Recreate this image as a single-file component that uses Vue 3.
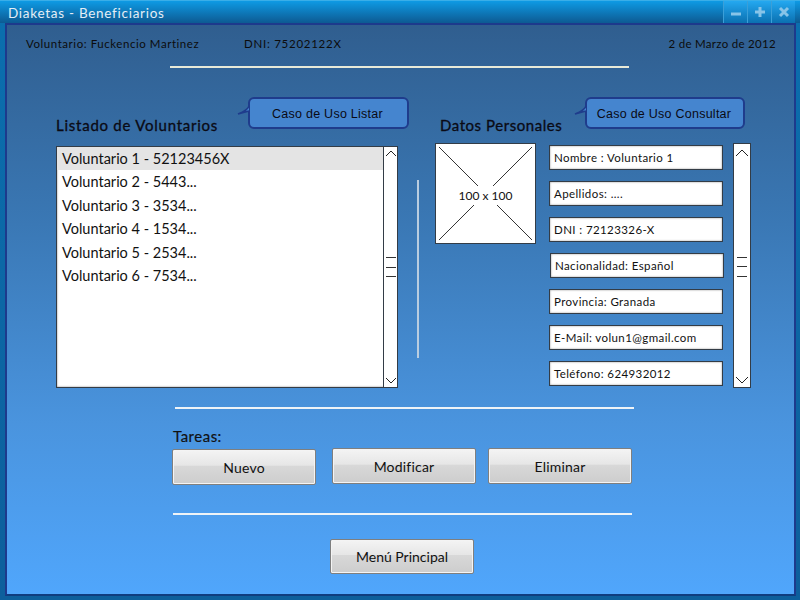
<template>
    <div class="window">
        <div class="titlebar">
            <span class="title">Diaketas - Beneficiarios</span>
            <div class="win-buttons">
                <div class="win-btn">
                    <svg width="12" height="12" viewBox="0 0 12 12"><path d="M1 8h10" class="glyph" /></svg>
                </div>
                <div class="win-btn">
                    <svg width="12" height="12" viewBox="0 0 12 12"><path d="M1 6h10M6 1v10" class="glyph" /></svg>
                </div>
                <div class="win-btn">
                    <svg width="12" height="12" viewBox="0 0 12 12"><path d="M2 2l8 8M10 2l-8 8" class="glyph" /></svg>
                </div>
            </div>
        </div>

        <div class="body">
            <div class="info">
                <span class="info-name">Voluntario: Fuckencio Martinez</span>
                <span class="info-dni">DNI: 75202122X</span>
                <span class="info-date">2 de Marzo de 2012</span>
            </div>
            <div class="rule rule-top"></div>

            <div class="main">
                <section class="left">
                    <div class="head">
                        <h2>Listado de Voluntarios</h2>
                        <div class="callout callout-left">
                            <svg class="tail" width="13" height="12" viewBox="0 0 13 12"><path d="M12 0C11 4 6 6 1 8L12 5" /></svg>
                            Caso de Uso Listar
                        </div>
                    </div>
                    <div class="listbox">
                        <ul class="items">
                            <li v-for="(item, i) in voluntarios" :key="item" :class="{ selected: i === 0 }">{{ item }}</li>
                        </ul>
                        <div class="scrollbar">
                            <svg class="chev" width="12" height="8" viewBox="0 0 12 8"><path d="M1 6l5-5 5 5" /></svg>
                            <div class="thumb"><i></i><i></i><i></i></div>
                            <svg class="chev" width="12" height="8" viewBox="0 0 12 8"><path d="M1 2l5 5 5-5" /></svg>
                        </div>
                    </div>
                </section>

                <div class="vline"></div>

                <section class="right">
                    <div class="head head-right">
                        <h2>Datos Personales</h2>
                        <div class="callout callout-right">
                            <svg class="tail" width="13" height="12" viewBox="0 0 13 12"><path d="M12 0C11 4 6 6 1 8L12 5" /></svg>
                            Caso de Uso Consultar
                        </div>
                    </div>
                    <div class="details">
                        <div class="photo">
                            <svg width="100" height="100" viewBox="0 0 100 100">
                                <path d="M3 3l94 94M97 3L3 97" />
                            </svg>
                            <span>100 x 100</span>
                        </div>
                        <div class="fields">
                            <div v-for="f in campos" :key="f" class="field">{{ f }}</div>
                        </div>
                        <div class="scrollbar scrollbar-tall">
                            <svg class="chev" width="14" height="8" viewBox="0 0 14 8"><path d="M1 7l6-6 6 6" /></svg>
                            <div class="thumb"><i></i><i></i><i></i></div>
                            <svg class="chev" width="14" height="8" viewBox="0 0 14 8"><path d="M1 1l6 6 6-6" /></svg>
                        </div>
                    </div>
                </section>
            </div>

            <div class="rule rule-mid"></div>

            <div class="tasks">
                <div class="tasks-label">Tareas:</div>
                <div class="task-buttons">
                    <button class="btn btn-low">Nuevo</button>
                    <button class="btn">Modificar</button>
                    <button class="btn btn-last">Eliminar</button>
                </div>
            </div>

            <div class="rule rule-bottom"></div>

            <div class="footer">
                <button class="btn btn-menu">Menú Principal</button>
            </div>
        </div>
    </div>
</template>

<script setup>
const voluntarios = [
    'Voluntario 1 - 52123456X',
    'Voluntario 2 - 5443...',
    'Voluntario 3 - 3534...',
    'Voluntario 4 - 1534...',
    'Voluntario 5 - 2534...',
    'Voluntario 6 - 7534...',
];

const campos = [
    'Nombre : Voluntario 1',
    'Apellidos: ....',
    'DNI : 72123326-X',
    'Nacionalidad: Español',
    'Provincia: Granada',
    'E-Mail: volun1@gmail.com',
    'Teléfono: 624932012',
];
</script>

<style>
html,
body {
    margin: 0;
    background: #0f3d7f;
}
</style>

<style scoped>
.window {
    width: 800px;
    height: 600px;
    display: flex;
    flex-direction: column;
    overflow: hidden;
    font-family: Lato, "Open Sans", sans-serif;
    color: #111;
    background: linear-gradient(#0b6fae, #0d5f9c);
    box-sizing: border-box;
}
.titlebar {
    height: 23px;
    flex: none;
    display: flex;
    justify-content: space-between;
    background: linear-gradient(#0e9ae4, #0d5a92);
    border-top: 1px solid #3aaee8;
    box-sizing: border-box;
}
.title {
    margin-left: 8px;
    font-size: 13.5px;
    line-height: 24px;
    letter-spacing: 0.72px;
    color: #e4eef6;
}
.win-buttons {
    display: flex;
    margin-right: 5px;
}
.win-btn {
    width: 24px;
    height: 22px;
    display: flex;
    align-items: center;
    justify-content: center;
    background: linear-gradient(#24a8f0, #0b70b0);
    border-left: 1px solid #3b9fd8;
    box-sizing: border-box;
}
.glyph {
    fill: none;
    stroke: #88c4e8;
    stroke-width: 3;
}

.body {
    flex: 1;
    margin: 0 4px 4px 5px;
    border: 2px solid #1d3a8c;
    border-bottom-color: #0f3d7f;
    background: linear-gradient(#305e8f, #3a78b5 35%, #4a94de 70%, #50a6fc);
    box-sizing: border-box;
}

.info {
    display: flex;
    padding: 11px 18px 0 19px;
    font-size: 11.5px;
    line-height: 15px;
    letter-spacing: 0.55px;
    color: #0c0c0c;
}
.info-name {
    width: 218px;
}
.info-date {
    margin-left: auto;
    letter-spacing: 0.3px;
}
.info-dni {
    letter-spacing: 0.73px;
}

.rule {
    height: 2px;
    background: #eef3f7;
}
.rule-top {
    width: 459px;
    margin: 15px 0 0 163px;
    background: #e8ead8;
}
.rule-mid {
    width: 459px;
    margin: 19px 0 0 168px;
}
.rule-bottom {
    width: 459px;
    margin: 28px 0 0 166px;
}

.main {
    display: flex;
    margin-top: 30px;
    padding-left: 49px;
}
.head {
    height: 48px;
    display: flex;
    align-items: flex-start;
    position: relative;
}
.head h2 {
    margin: 17px 0 0;
    font-size: 15px;
    font-weight: 400;
    line-height: 20px;
    letter-spacing: 0.75px;
    color: #0a0a14;
    -webkit-text-stroke: 0.3px #0a0a14;
    white-space: nowrap;
}
.head-right h2 {
    letter-spacing: 0.55px;
}
.callout {
    position: absolute;
    top: -1px;
    height: 32px;
    padding: 1px 2px 0 0;
    box-sizing: border-box;
    display: flex;
    align-items: center;
    justify-content: center;
    background: #4585cf;
    border: 2px solid #1f3c8c;
    border-radius: 6px;
    font-family: "Liberation Sans", Arial, sans-serif;
    font-size: 12.5px;
    letter-spacing: 0.25px;
    color: #0a0a14;
}
.tail {
    position: absolute;
    left: -13px;
    top: 7px;
}
.tail path {
    fill: #4585cf;
    stroke: #1f3c8c;
    stroke-width: 1.6;
}
.callout-left {
    left: 192px;
    width: 161px;
}
.callout-right {
    left: 150px;
    width: 160px;
}

.left {
    width: 342px;
}
.listbox {
    height: 242px;
    display: flex;
    background: #fff;
    border: 1px solid #333c46;
    box-shadow: inset 0 0 2px #777;
    box-sizing: border-box;
}
.items {
    flex: 1;
    margin: 0;
    padding: 0;
    list-style: none;
}
.items li {
    height: 23.4px;
    padding-left: 5px;
    font-size: 14.5px;
    line-height: 24px;
    color: #111;
}
.items li.selected {
    background: #e4e4e4;
}
.scrollbar {
    width: 14px;
    flex: none;
    display: flex;
    flex-direction: column;
    align-items: center;
    justify-content: space-between;
    padding: 3px 0;
    border-left: 1px solid #333c46;
    box-sizing: border-box;
    background: #fff;
}
.chev {
    fill: none;
    stroke: #222;
    stroke-width: 1;
}
.thumb {
    width: 100%;
    display: flex;
    flex-direction: column;
    align-items: center;
    gap: 8.5px;
}
.thumb i {
    width: 10px;
    height: 1px;
    background: #333;
}

.vline {
    width: 2px;
    height: 178px;
    margin: 82px 17px 0 19px;
    background: #b9cde0;
}

.right {
    width: 316px;
    margin-left: -1px;
}
.head-right {
    padding-left: 5px;
}
.details {
    display: flex;
    margin-top: -3px;
    align-items: flex-start;
}
.photo {
    width: 101px;
    height: 101px;
    flex: none;
    position: relative;
    display: flex;
    align-items: center;
    justify-content: center;
    background: #fff;
    border: 1px solid #333c46;
    box-sizing: border-box;
}
.photo svg {
    position: absolute;
    left: 0;
    top: 0;
    width: 100%;
    height: 100%;
}
.photo path {
    fill: none;
    stroke: #333;
    stroke-width: 1;
}
.photo span {
    position: relative;
    margin-top: 3px;
    padding: 2px 1px;
    font-size: 12px;
    background: #fff;
}
.fields {
    width: 174px;
    flex: none;
    margin: 2px 10px 0 13px;
    display: flex;
    flex-direction: column;
    gap: 10.6px;
}
.field {
    height: 25.4px;
    padding-left: 4px;
    font-size: 11.5px;
    line-height: 24px;
    letter-spacing: 0.4px;
    background: #fff;
    border: 1px solid #333c46;
    box-shadow: inset 0 0 2px #888;
    box-sizing: border-box;
    white-space: nowrap;
}
.field:nth-child(4) {
    margin: 0 -1px 0 1px;
}
.scrollbar-tall {
    width: 18px;
    height: 245px;
    padding: 5px 0 3px;
    border: 1px solid #333c46;
}

.tasks {
    padding-left: 165px;
}
.tasks-label {
    margin-top: 17px;
    padding-left: 1px;
    font-size: 15px;
    line-height: 20px;
    letter-spacing: 0.5px;
    -webkit-text-stroke: 0.2px #111;
}
.task-buttons {
    display: flex;
    gap: 16px;
    margin-top: 2px;
    align-items: flex-start;
}
.task-buttons .btn-low {
    margin-top: 1px;
}
.task-buttons .btn-last {
    margin-left: -4px;
}
.btn {
    width: 144px;
    height: 36px;
    padding: 0;
    background: linear-gradient(#f4f4f4, #e6e6e6 45%, #d8d8d8 47%, #cdcdcd);
    border: 1px solid #7f7f7f;
    border-radius: 2px;
    box-shadow: inset 0 0 0 1px #f4f4f4;
    font-family: Lato, "Open Sans", sans-serif;
    font-size: 14px;
    letter-spacing: 0.2px;
    color: #111;
}
.btn-menu {
    height: 35px;
    letter-spacing: 0;
}

.footer {
    margin-top: 24px;
    padding-left: 323px;
}
</style>
